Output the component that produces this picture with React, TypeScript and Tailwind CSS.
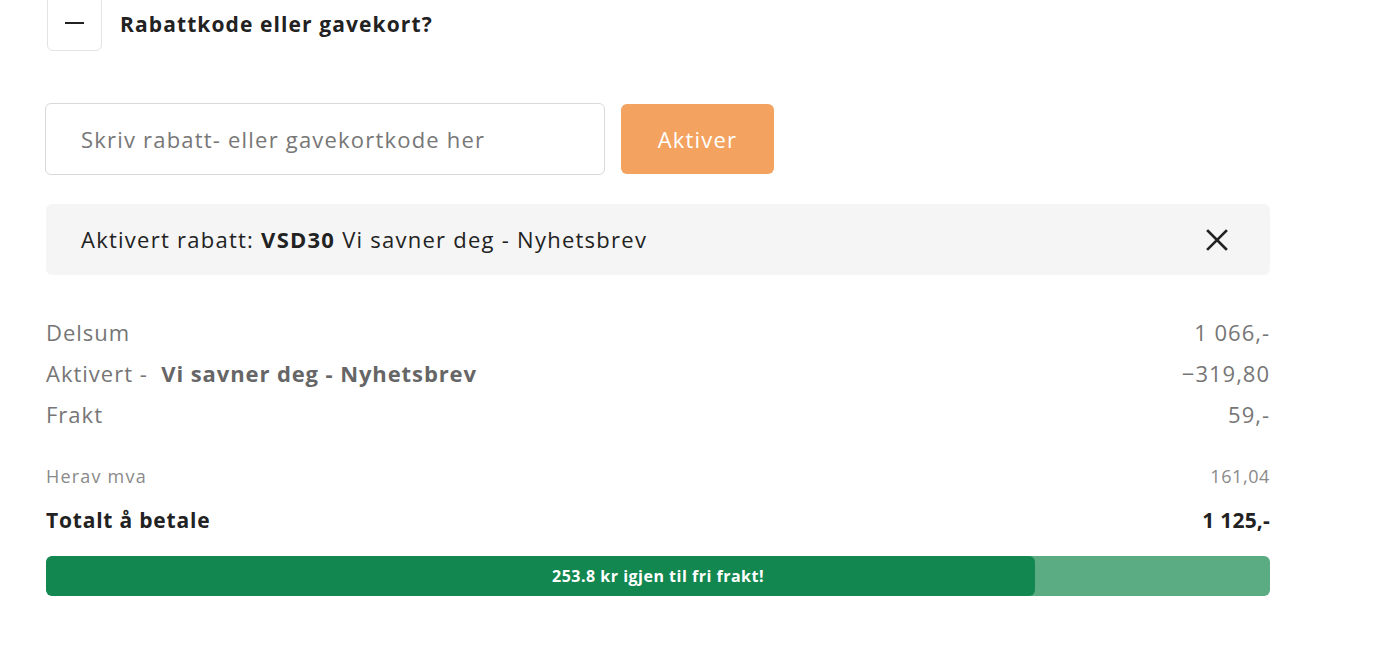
const sans = "font-['Open_Sans',sans-serif]";

function SummaryRow({ label, value }: { label: React.ReactNode; value: string }) {
  return (
    <div className="flex items-center justify-between h-[41px] text-[22px] tracking-[1px] text-[#767676]">
      <span>{label}</span>
      <span className="tracking-[1px]">{value}</span>
    </div>
  );
}

export default function App() {
  const progress = 80.8;

  return (
    <div className={`${sans} bg-white w-[1400px] h-[647px] overflow-hidden`}>
      <div className="w-[1224px] ml-[46px] -mt-[6px]">
        {/* Toggle header */}
        <div className="flex items-center gap-[18px] pt-[1px]">
          <div className="w-[55px] h-[56px] rounded-[6px] border border-[#e3e3e3] flex items-center justify-center ml-[1px]">
            <div className="w-[19px] h-[2.5px] bg-[#222]" />
          </div>
          <h2 className="text-[21px] font-bold text-[#222] tracking-[1.1px] mt-[3px]">
            Rabattkode eller gavekort?
          </h2>
        </div>

        {/* Code input */}
        <div className="flex items-center gap-[16px] mt-[52px]">
          <input
            placeholder="Skriv rabatt- eller gavekortkode her"
            className="w-[560px] h-[72px] rounded-[6px] border border-[#d9d9d9] pl-[35px] text-[22px] tracking-[1.2px] text-[#222] placeholder:text-[#777] outline-none -ml-[1px]"
          />
          <button className="w-[153px] h-[70px] rounded-[6px] bg-[#f3a25f] text-white text-[22px] tracking-[1.2px]">
            Aktiver
          </button>
        </div>

        {/* Active discount */}
        <div className="mt-[29px] h-[71px] rounded-[6px] bg-[#f5f5f5] flex items-center justify-between pl-[35px] pr-[42px]">
          <p className="text-[22px] tracking-[1.25px] text-[#222]">
            Aktivert rabatt: <span className="font-bold">VSD30</span> Vi savner deg - Nyhetsbrev
          </p>
          <svg width="22" height="22" viewBox="0 0 22 22" fill="none" stroke="#222" strokeWidth="2.6" strokeLinecap="square">
            <path d="M2 2L20 20M20 2L2 20" />
          </svg>
        </div>

        {/* Summary */}
        <div className="mt-[37px]">
          <SummaryRow label="Delsum" value="1 066,-" />
          <SummaryRow
            label={
              <>
                Aktivert -&nbsp; <span className="font-bold text-[#666] tracking-[0.9px]">Vi savner deg - Nyhetsbrev</span>
              </>
            }
            value="−319,80"
          />
          <SummaryRow label="Frakt" value="59,-" />
        </div>

        <div className="flex items-center justify-between mt-[28px] text-[18px] tracking-[1.2px] text-[#8a8a8a]">
          <span>Herav mva</span>
          <span className="tracking-[0.6px]">161,04</span>
        </div>

        <div className="flex items-center justify-between mt-[15px] text-[21px] tracking-[0.8px] font-bold text-[#222]">
          <span>Totalt å betale</span>
          <span className="tracking-[0.2px]">1 125,-</span>
        </div>

        {/* Free shipping progress */}
        <div className="relative mt-[19px] h-[40px] rounded-[6px] bg-[#5bab83] overflow-hidden">
          <div className="h-full rounded-[6px] bg-[#138750]" style={{ width: `${progress}%` }} />
          <div className="absolute inset-0 flex items-center justify-center text-white text-[16px] tracking-[0.5px] font-bold">
            253.8 kr igjen til fri frakt!
          </div>
        </div>
      </div>
    </div>
  );
}
